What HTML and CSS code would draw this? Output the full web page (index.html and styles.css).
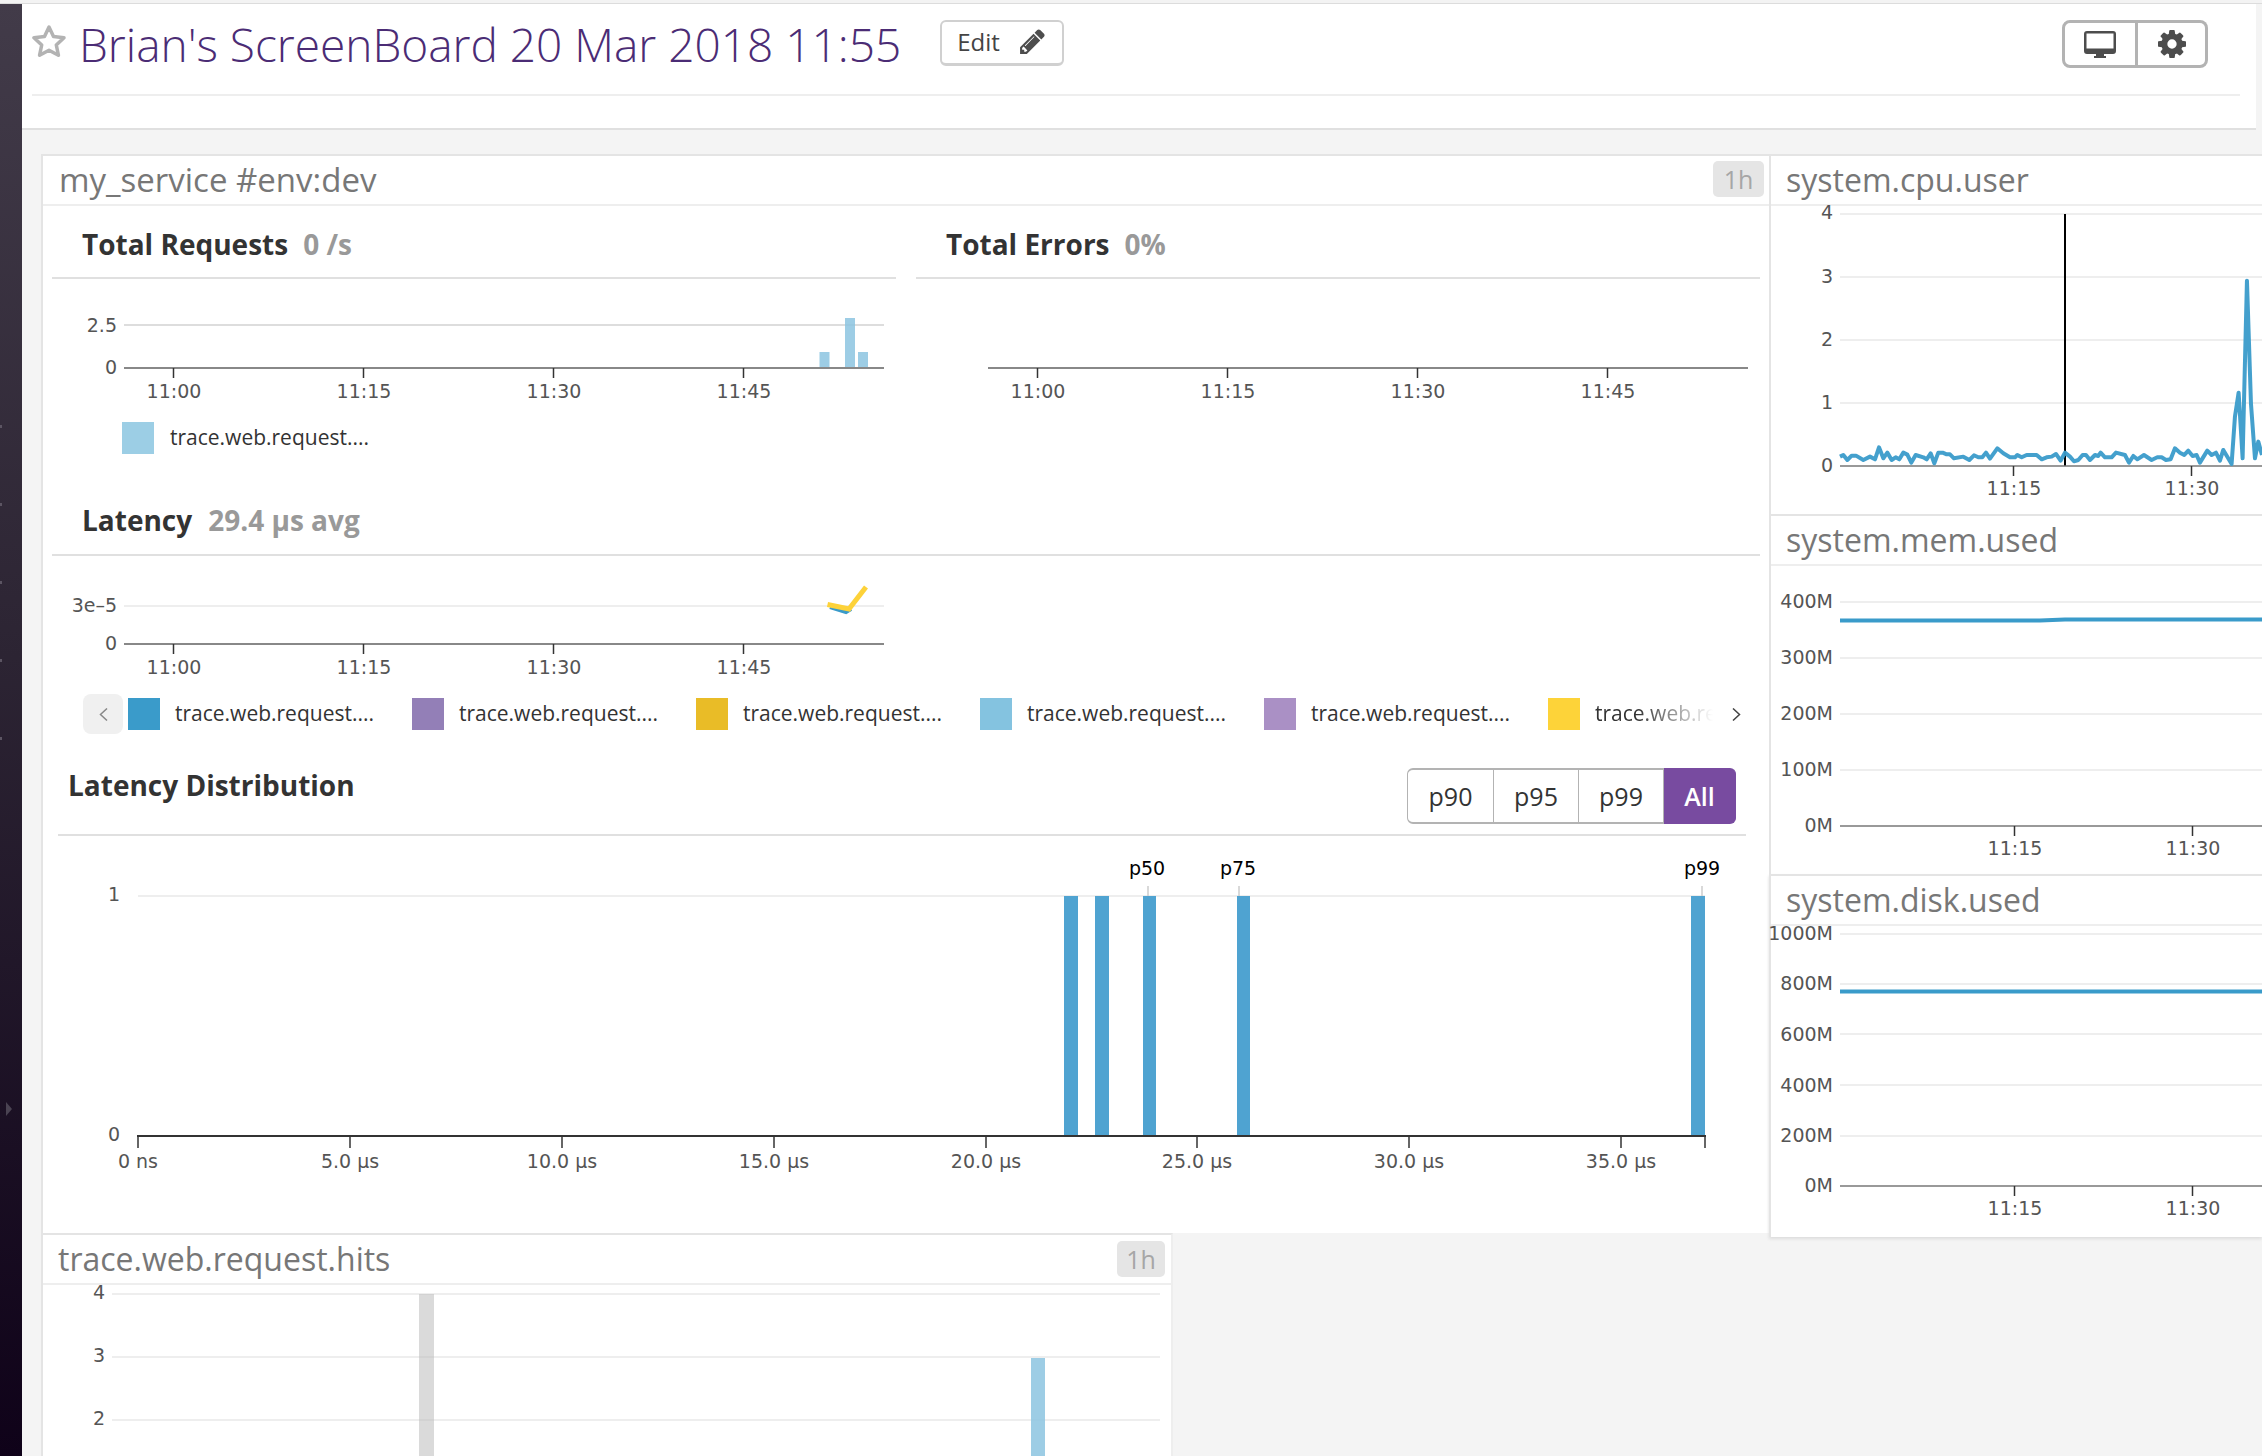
FILE: index.html
```html
<!DOCTYPE html>
<html lang="en">
<head>
    <meta charset="UTF-8">
    <title>Brian's ScreenBoard 20 Mar 2018 11:55</title>
    <link rel="stylesheet" href="styles.css">
</head>
<body>
<div class="page">
    <div class="sidebar">
        <span class="side-dot"></span>
        <span class="side-dot"></span>
        <span class="side-dot"></span>
        <span class="side-dot"></span>
        <span class="side-dot"></span>
        <span class="side-arrow"></span>
    </div>

    <div class="content">
        <header class="board-header">
            <div class="header-top">
                <svg class="star" viewBox="0 0 34 32"><polygon points="17,2 21.5,11.5 32,12.8 24.3,20 26.4,30.2 17,25.2 7.6,30.2 9.7,20 2,12.8 12.5,11.5"/></svg>
                <h1 class="board-title">Brian's ScreenBoard 20 Mar 2018 11:55</h1>
                <button class="edit-btn">Edit
                    <svg class="pencil" viewBox="0 0 1792 1792"><path d="M491 1536l91-91-235-235-91 91v107h128v128h107zm523-928q0-22-22-22-10 0-17 7l-542 542q-7 7-7 17 0 22 22 22 10 0 17-7l542-542q7-7 7-17zm-54-192l416 416-832 832h-416v-416zm683 96q0 53-37 90l-166 166-416-416 166-165q36-38 90-38 53 0 91 38l235 234q37 39 37 91z"/></svg>
                </button>
                <div class="view-btns">
                    <button class="view-btn">
                        <svg class="monitor" viewBox="0 0 32 27"><path fill-rule="evenodd" d="M3 0h26a3 3 0 0 1 3 3v17a3 3 0 0 1-3 3H20v2h2v2H10v-2h2v-2H3a3 3 0 0 1-3-3V3a3 3 0 0 1 3-3zM2.500 2.500V17.500H29.500V2.500z"/></svg>
                    </button>
                    <button class="view-btn">
                        <svg class="gear" viewBox="128 128 1536 1536"><path d="M1152 896q0-106-75-181t-181-75-181 75-75 181 75 181 181 75 181-75 75-181zm512-109v222q0 12-8 23t-20 13l-185 28q-19 54-39 91 35 50 107 138 10 12 10 25t-9 23q-27 37-99 108t-94 71q-12 0-26-9l-138-108q-44 23-91 38-16 136-29 186-7 28-36 28h-222q-14 0-24.500-8.500t-11.500-21.500l-28-184q-49-16-90-37l-141 107q-10 9-25 9-14 0-25-11-126-114-165-168-7-10-7-23 0-12 8-23 15-21 51-66.500t54-70.500q-27-50-41-99l-183-27q-13-2-21-12.500t-8-23.500v-222q0-12 8-23t19-13l186-28q14-46 39-92-40-57-107-138-10-12-10-24 0-10 9-23 26-36 98.500-107.500t94.500-71.500q13 0 26 10l138 107q44-23 91-38 16-136 29-186 7-28 36-28h222q14 0 24.500 8.500t11.500 21.500l28 184q49 16 90 37l142-107q9-9 24-9 13 0 25 10 129 119 165 170 7 8 7 22 0 12-8 23-15 21-51 66.500t-54 70.500q26 50 41 98l183 28q13 2 21 12.500t8 23.500z"/></svg>
                    </button>
                </div>
            </div>
        </header>

        <div class="board">
            <div class="left-col">
                <section class="panel main-panel">
                    <div class="panel-head">
                        <span class="panel-title main-title">my_service #env:dev</span>
                        <span class="time-badge">1h</span>
                    </div>

                    <div class="metric-row">
                        <div class="metric">
                            <div class="metric-title">Total Requests <span class="metric-value">0 /s</span></div>
                            <svg class="chart" width="844" height="137" viewBox="52 279 844 137">
                                <line class="grid dark" x1="124" y1="325" x2="884" y2="325"/>
                                <rect class="bar-light" x="819.500" y="352" width="10" height="16"/>
                                <rect class="bar-light" x="845" y="318" width="10" height="50"/>
                                <rect class="bar-light" x="858" y="352" width="10" height="16"/>
                                <line class="axis" x1="124" y1="368" x2="884" y2="368"/>
                                <line class="tick" x1="173.500" y1="368" x2="173.500" y2="378"/>
                                <line class="tick" x1="363.500" y1="368" x2="363.500" y2="378"/>
                                <line class="tick" x1="553.500" y1="368" x2="553.500" y2="378"/>
                                <line class="tick" x1="743.500" y1="368" x2="743.500" y2="378"/>
                                <text class="y-label" x="117" y="332">2.5</text>
                                <text class="y-label" x="117" y="374">0</text>
                                <text class="x-label" x="174" y="398">11:00</text>
                                <text class="x-label" x="364" y="398">11:15</text>
                                <text class="x-label" x="554" y="398">11:30</text>
                                <text class="x-label" x="744" y="398">11:45</text>
                            </svg>
                            <div class="legend-single">
                                <span class="swatch c-light"></span>
                                <span class="legend-text">trace.web.request....</span>
                            </div>
                        </div>
                        <div class="metric">
                            <div class="metric-title errors">Total Errors <span class="metric-value">0%</span></div>
                            <svg class="chart" width="844" height="137" viewBox="916 279 844 137">
                                <line class="axis" x1="988" y1="368" x2="1748" y2="368"/>
                                <line class="tick" x1="1037.500" y1="368" x2="1037.500" y2="378"/>
                                <line class="tick" x1="1227.500" y1="368" x2="1227.500" y2="378"/>
                                <line class="tick" x1="1417.500" y1="368" x2="1417.500" y2="378"/>
                                <line class="tick" x1="1607.500" y1="368" x2="1607.500" y2="378"/>
                                <text class="x-label" x="1038" y="398">11:00</text>
                                <text class="x-label" x="1228" y="398">11:15</text>
                                <text class="x-label" x="1418" y="398">11:30</text>
                                <text class="x-label" x="1608" y="398">11:45</text>
                            </svg>
                        </div>
                    </div>

                    <div class="latency">
                        <div class="metric-title latency-title">Latency <span class="metric-value">29.4 µs avg</span></div>
                        <svg class="chart" width="1708" height="134" viewBox="52 556 1708 134">
                            <line class="grid" x1="124" y1="606" x2="884" y2="606"/>
                            <polyline class="spark-blue" points="830,607 846,612 851,609"/>
                            <polyline class="spark-yellow" points="827.500,604.500 849,609 866,587"/>
                            <line class="axis" x1="124" y1="644" x2="884" y2="644"/>
                            <line class="tick" x1="173.500" y1="644" x2="173.500" y2="654"/>
                            <line class="tick" x1="363.500" y1="644" x2="363.500" y2="654"/>
                            <line class="tick" x1="553.500" y1="644" x2="553.500" y2="654"/>
                            <line class="tick" x1="743.500" y1="644" x2="743.500" y2="654"/>
                            <text class="y-label" x="117" y="612">3e–5</text>
                            <text class="y-label" x="117" y="650">0</text>
                            <text class="x-label" x="174" y="674">11:00</text>
                            <text class="x-label" x="364" y="674">11:15</text>
                            <text class="x-label" x="554" y="674">11:30</text>
                            <text class="x-label" x="744" y="674">11:45</text>
                        </svg>
                    </div>

                    <div class="legend-row">
                        <span class="legend-prev"><svg class="chevron" viewBox="0 0 9 13"><polyline points="8,.5 1.500,6.500 8,12.500"/></svg></span>
                        <div class="legend-item"><span class="swatch c-blue"></span><span class="legend-text">trace.web.request....</span></div>
                        <div class="legend-item"><span class="swatch c-purple"></span><span class="legend-text">trace.web.request....</span></div>
                        <div class="legend-item"><span class="swatch c-gold"></span><span class="legend-text">trace.web.request....</span></div>
                        <div class="legend-item"><span class="swatch c-sky"></span><span class="legend-text">trace.web.request....</span></div>
                        <div class="legend-item"><span class="swatch c-lilac"></span><span class="legend-text">trace.web.request....</span></div>
                        <div class="legend-item last"><span class="swatch c-yellow"></span><span class="legend-text fade">trace.web.request....</span></div>
                        <span class="legend-next"><svg class="chevron dark" viewBox="0 0 9 13"><polyline points="1,.5 7.500,6.500 1,12.500"/></svg></span>
                    </div>

                    <div class="dist-head">
                        <span class="dist-title">Latency Distribution</span>
                        <div class="pct-btns">
                            <button class="pct-btn">p90</button>
                            <button class="pct-btn">p95</button>
                            <button class="pct-btn">p99</button>
                            <button class="pct-btn active">All</button>
                        </div>
                    </div>

                    <svg class="chart" width="1726" height="396" viewBox="43 836 1726 396">
                        <line class="grid" x1="138" y1="896" x2="1705" y2="896"/>
                        <line class="pct-tick" x1="1148" y1="886" x2="1148" y2="896"/>
                        <line class="pct-tick" x1="1239" y1="886" x2="1239" y2="896"/>
                        <line class="pct-tick" x1="1702" y1="886" x2="1702" y2="896"/>
                        <rect class="bar-dist" x="1064" y="896" width="14" height="240"/>
                        <rect class="bar-dist" x="1095" y="896" width="14" height="240"/>
                        <rect class="bar-dist" x="1143" y="896" width="13" height="240"/>
                        <rect class="bar-dist" x="1237" y="896" width="13" height="240"/>
                        <rect class="bar-dist" x="1691" y="896" width="14" height="240"/>
                        <line class="dist-axis" x1="137" y1="1136" x2="1706" y2="1136"/>
                        <line class="tick" x1="138" y1="1136" x2="138" y2="1148"/>
                        <line class="tick" x1="350" y1="1136" x2="350" y2="1148"/>
                        <line class="tick" x1="562" y1="1136" x2="562" y2="1148"/>
                        <line class="tick" x1="774" y1="1136" x2="774" y2="1148"/>
                        <line class="tick" x1="986" y1="1136" x2="986" y2="1148"/>
                        <line class="tick" x1="1197" y1="1136" x2="1197" y2="1148"/>
                        <line class="tick" x1="1409" y1="1136" x2="1409" y2="1148"/>
                        <line class="tick" x1="1621" y1="1136" x2="1621" y2="1148"/>
                        <line class="tick" x1="1705" y1="1136" x2="1705" y2="1148"/>
                        <text class="pct-label" x="1147" y="875">p50</text>
                        <text class="pct-label" x="1238" y="875">p75</text>
                        <text class="pct-label" x="1702" y="875">p99</text>
                        <text class="y-label" x="120" y="901">1</text>
                        <text class="y-label" x="120" y="1141">0</text>
                        <text class="x-label" x="138" y="1168">0 ns</text>
                        <text class="x-label" x="350" y="1168">5.0 µs</text>
                        <text class="x-label" x="562" y="1168">10.0 µs</text>
                        <text class="x-label" x="774" y="1168">15.0 µs</text>
                        <text class="x-label" x="986" y="1168">20.0 µs</text>
                        <text class="x-label" x="1197" y="1168">25.0 µs</text>
                        <text class="x-label" x="1409" y="1168">30.0 µs</text>
                        <text class="x-label" x="1621" y="1168">35.0 µs</text>
                    </svg>
                </section>

                <section class="panel hits-panel">
                    <div class="panel-head">
                        <span class="panel-title">trace.web.request.hits</span>
                        <span class="time-badge small">1h</span>
                    </div>
                    <svg class="chart" width="1128" height="171" viewBox="43 1285 1128 171">
                        <line class="grid" x1="112" y1="1294" x2="1160" y2="1294"/>
                        <line class="grid" x1="112" y1="1357" x2="1160" y2="1357"/>
                        <line class="grid" x1="112" y1="1420" x2="1160" y2="1420"/>
                        <rect class="bar-gray" x="419" y="1294" width="15" height="162"/>
                        <rect class="bar-light" x="1031" y="1358" width="14" height="98"/>
                        <text class="y-label" x="105" y="1299">4</text>
                        <text class="y-label" x="105" y="1362">3</text>
                        <text class="y-label" x="105" y="1425">2</text>
                    </svg>
                </section>
            </div>

            <div class="right-col">
                <section class="panel side-panel">
                    <div class="panel-head"><span class="panel-title">system.cpu.user</span></div>
                    <svg class="chart" width="491" height="308" viewBox="1771 206 491 308">
                        <line class="grid" x1="1840" y1="214" x2="2262" y2="214"/>
                        <line class="grid" x1="1840" y1="277" x2="2262" y2="277"/>
                        <line class="grid" x1="1840" y1="340" x2="2262" y2="340"/>
                        <line class="grid" x1="1840" y1="403" x2="2262" y2="403"/>
                        <line class="cursor" x1="2065" y1="214" x2="2065" y2="466"/>
                        <line class="axis thin" x1="1840" y1="466" x2="2262" y2="466"/>
                        <line class="tick" x1="2013.500" y1="466" x2="2013.500" y2="476"/>
                        <line class="tick" x1="2191.500" y1="466" x2="2191.500" y2="476"/>
                        <polyline class="cpu-line" transform="translate(1750 150) scale(.3333)" points="270,920 280,915 292,930 305,917 318,917 340,930 360,920 375,928 387,892 400,925 412,908 425,930 437,922 448,928 460,908 472,914 484,938 497,915 520,922 530,928 542,910 553,940 565,908 578,908 590,913 600,913 612,925 640,920 658,930 672,916 685,922 697,922 708,908 720,926 742,895 760,910 780,922 795,922 802,915 815,922 830,915 860,915 875,928 890,922 905,920 918,912 932,932 945,908 960,920 972,934 985,930 998,915 1008,915 1020,930 1035,915 1045,918 1052,908 1065,922 1085,922 1098,908 1125,915 1137,938 1150,918 1162,928 1182,915 1205,930 1222,922 1235,922 1248,930 1262,928 1275,895 1290,908 1303,915 1315,902 1328,918 1340,915 1350,938 1372,902 1385,915 1398,908 1410,932 1420,900 1445,942 1455,800 1466,728 1478,925 1491,392 1503,760 1515,925 1525,875 1536,915"/>
                        <text class="y-label" x="1833" y="219">4</text>
                        <text class="y-label" x="1833" y="283">3</text>
                        <text class="y-label" x="1833" y="346">2</text>
                        <text class="y-label" x="1833" y="409">1</text>
                        <text class="y-label" x="1833" y="472">0</text>
                        <text class="x-label" x="2014" y="495">11:15</text>
                        <text class="x-label" x="2192" y="495">11:30</text>
                    </svg>
                </section>
                <section class="panel side-panel">
                    <div class="panel-head"><span class="panel-title">system.mem.used</span></div>
                    <svg class="chart" width="491" height="308" viewBox="1771 566 491 308">
                        <line class="grid" x1="1840" y1="602" x2="2262" y2="602"/>
                        <line class="grid" x1="1840" y1="658" x2="2262" y2="658"/>
                        <line class="grid" x1="1840" y1="714" x2="2262" y2="714"/>
                        <line class="grid" x1="1840" y1="770" x2="2262" y2="770"/>
                        <polyline class="flat-line" points="1840,620.500 2040,620.500 2065,619.500 2262,619.500"/>
                        <line class="axis thin" x1="1840" y1="826" x2="2262" y2="826"/>
                        <line class="tick" x1="2014.500" y1="826" x2="2014.500" y2="836"/>
                        <line class="tick" x1="2192.500" y1="826" x2="2192.500" y2="836"/>
                        <text class="y-label" x="1833" y="608">400M</text>
                        <text class="y-label" x="1833" y="664">300M</text>
                        <text class="y-label" x="1833" y="720">200M</text>
                        <text class="y-label" x="1833" y="776">100M</text>
                        <text class="y-label" x="1833" y="832">0M</text>
                        <text class="x-label" x="2015" y="855">11:15</text>
                        <text class="x-label" x="2193" y="855">11:30</text>
                    </svg>
                </section>
                <section class="panel side-panel last-side">
                    <div class="panel-head"><span class="panel-title">system.disk.used</span></div>
                    <svg class="chart" width="491" height="311" viewBox="1771 926 491 311">
                        <line class="grid" x1="1840" y1="934" x2="2262" y2="934"/>
                        <line class="grid" x1="1840" y1="984" x2="2262" y2="984"/>
                        <line class="grid" x1="1840" y1="1034" x2="2262" y2="1034"/>
                        <line class="grid" x1="1840" y1="1085" x2="2262" y2="1085"/>
                        <line class="grid" x1="1840" y1="1136" x2="2262" y2="1136"/>
                        <line class="flat-line" x1="1840" y1="991.500" x2="2262" y2="991.500"/>
                        <line class="axis thin" x1="1840" y1="1186" x2="2262" y2="1186"/>
                        <line class="tick" x1="2014.500" y1="1186" x2="2014.500" y2="1196"/>
                        <line class="tick" x1="2192.500" y1="1186" x2="2192.500" y2="1196"/>
                        <text class="y-label" x="1833" y="940">1000M</text>
                        <text class="y-label" x="1833" y="990">800M</text>
                        <text class="y-label" x="1833" y="1041">600M</text>
                        <text class="y-label" x="1833" y="1092">400M</text>
                        <text class="y-label" x="1833" y="1142">200M</text>
                        <text class="y-label" x="1833" y="1192">0M</text>
                        <text class="x-label" x="2015" y="1215">11:15</text>
                        <text class="x-label" x="2193" y="1215">11:30</text>
                    </svg>
                </section>
            </div>
        </div>
    </div>
</div>
</body>
</html>
```

FILE: styles.css
```css
* {
    box-sizing: border-box;
}
html, body {
    margin: 0;
    height: 100%;
    overflow: hidden;
}
body {
    font-family: "Open Sans", sans-serif;
    background-color: #f4f4f4;
    color: #333;
}
button {
    font-family: inherit;
    background: white;
    cursor: pointer;
}
.page {
    display: flex;
    height: 1456px;
    padding-top: 4px;
    background: linear-gradient(#f3f3f3 3px, #dcdcdc 3px, #dcdcdc 4px, transparent 4px);
}

/* sidebar */
.sidebar {
    width: 22px;
    flex: none;
    display: flex;
    flex-direction: column;
    align-items: flex-start;
    gap: 75px;
    padding-top: 421px;
    background: linear-gradient(#423b49, #2c2433 45%, #0f0219);
}
.side-dot {
    width: 2px;
    height: 3px;
    background-color: #5c5563;
}
.side-arrow {
    width: 0;
    height: 0;
    margin: 287px 0 0 6px;
    border-left: 6px solid #4a4352;
    border-top: 7px solid transparent;
    border-bottom: 7px solid transparent;
}

.content {
    flex: 1;
    min-width: 0;
}

/* board header */
.board-header {
    height: 126px;
    margin-right: 6px;
    background: white;
    border-bottom: 2px solid #e0e0e0;
}
.header-top {
    height: 92px;
    margin: 0 16px 0 10px;
    padding-top: 16px;
    display: flex;
    align-items: flex-start;
    border-bottom: 2px solid #eee;
}
.star {
    width: 34px;
    height: 32px;
    margin-top: 5px;
    flex: none;
}
.star polygon {
    fill: none;
    stroke: #b3b3b3;
    stroke-width: 3.500;
    stroke-linejoin: round;
}
.board-title {
    margin: -8px 0 0 13px;
    font-size: 46px;
    font-weight: 300;
    line-height: 64px;
    color: #4b2c75;
    white-space: nowrap;
}
.edit-btn {
    margin-left: 39px;
    width: 124px;
    height: 46px;
    flex: none;
    display: flex;
    align-items: center;
    justify-content: space-between;
    padding: 0 15px 2px;
    font-size: 24px;
    color: #444;
    border: 2px solid #d0d0d0;
    border-bottom-width: 3px;
    border-radius: 6px;
}
.pencil {
    width: 29px;
    height: 29px;
    fill: #4d4d4d;
}
.view-btns {
    margin-left: auto;
    margin-right: 32px;
    display: flex;
}
.view-btn {
    width: 76px;
    height: 48px;
    padding: 0;
    display: flex;
    align-items: center;
    justify-content: center;
    border: 3px solid #b3b3b3;
    border-radius: 8px 0 0 8px;
}
.view-btn + .view-btn {
    width: 70px;
    border-left: 0;
    border-radius: 0 8px 8px 0;
}
.monitor {
    width: 32px;
    height: 27px;
    fill: #4d4d4d;
}
.gear {
    width: 28px;
    height: 28px;
    fill: #4d4d4d;
}

/* widgets */
.board {
    display: flex;
    padding: 24px 0 0 19px;
}
.left-col {
    width: 1728px;
    flex: none;
}
.right-col {
    flex: 1;
    min-width: 0;
}
.panel {
    background: white;
    border-top: 2px solid #e4e4e4;
    border-left: 2px solid #e4e4e4;
}
.main-panel {
    height: 1079px;
}
.hits-panel {
    width: 1132px;
    height: 223px;
    border-right: 2px solid #eee;
}
.side-panel {
    height: 360px;
}
.last-side {
    height: 363px;
    box-shadow: 0 2px 3px #ddd;
}
.panel-head {
    height: 50px;
    display: flex;
    align-items: flex-start;
    justify-content: space-between;
    padding-left: 15px;
    border-bottom: 2px solid #eee;
}
.panel-title {
    font-size: 32px;
    line-height: 48px;
    color: #777;
    white-space: nowrap;
}
.main-title {
    margin-left: 1px;
    font-size: 33px;
}
.time-badge {
    margin: 5px 5px 0 0;
    width: 51px;
    height: 36px;
    text-align: center;
    font-size: 25px;
    line-height: 36px;
    color: #a6a6a6;
    background-color: #e5e5e5;
    border-radius: 5px;
}
.time-badge.small {
    margin: 6px 6px 0 0;
    width: 48px;
}
.metric-row {
    display: flex;
    gap: 20px;
    margin: 0 9px;
}
.metric {
    width: 844px;
}
.metric-title {
    height: 73px;
    padding: 5px 0 0 30px;
    display: flex;
    align-items: center;
    gap: 15px;
    font-size: 28px;
    font-weight: 700;
    color: #333;
    border-bottom: 2px solid #e0e0e0;
    white-space: nowrap;
}
.metric-value {
    font-weight: 700;
    color: #999;
}
.latency {
    margin: 28px 9px 0;
}
.latency-title {
    height: 74px;
    padding-top: 4px;
    gap: 16px;
}
.chart {
    display: block;
    overflow: visible;
}
.grid {
    stroke: #eee;
    stroke-width: 2;
}
.grid.dark {
    stroke: #ddd;
}
.axis {
    stroke: #888;
    stroke-width: 2;
}
.axis.thin {
    stroke: #777;
    stroke-width: 1.500;
}
.tick {
    stroke: #333;
    stroke-width: 1.500;
}
.pct-tick {
    stroke: #ccc;
    stroke-width: 1.500;
}
.dist-axis {
    stroke: #333;
    stroke-width: 2;
}
.cursor {
    stroke: black;
    stroke-width: 2;
}
.y-label, .x-label, .pct-label {
    font-family: "DejaVu Sans", sans-serif;
    font-size: 19px;
    fill: #555;
}
.y-label {
    text-anchor: end;
}
.x-label, .pct-label {
    text-anchor: middle;
}
.pct-label {
    fill: black;
}
.bar-light {
    fill: #8cc4e0;
    opacity: 0.85;
}
.bar-gray {
    fill: #bbb;
    opacity: 0.55;
}
.bar-dist {
    fill: #4fa3d1;
}
.spark-blue, .spark-yellow, .cpu-line, .flat-line {
    fill: none;
}
.spark-blue {
    stroke: #3a9bca;
    stroke-width: 4;
}
.spark-yellow {
    stroke: #fdd239;
    stroke-width: 5;
}
.cpu-line {
    stroke: #3a9bca;
    stroke-width: 12;
    stroke-linejoin: round;
    opacity: 0.95;
}
.flat-line {
    stroke: #3a9bca;
    stroke-width: 4;
}

/* legends */
.swatch {
    width: 32px;
    height: 32px;
    flex: none;
}
.c-light { background-color: #9ccee5; }
.c-blue { background-color: #3a9bca; }
.c-purple { background-color: #937fb7; }
.c-gold { background-color: #e9bc27; }
.c-sky { background-color: #84c3e0; }
.c-lilac { background-color: #aa90c5; }
.c-yellow { background-color: #fdd339; }
.legend-single {
    display: flex;
    align-items: center;
    gap: 16px;
    margin: 6px 0 0 70px;
}
.legend-text {
    padding-bottom: 2px;
    font-size: 21px;
    line-height: 30px;
    color: #333;
    white-space: nowrap;
}
.legend-row {
    height: 40px;
    margin: 4px 0 0 40px;
    display: flex;
    align-items: center;
}
.legend-prev {
    width: 40px;
    height: 40px;
    margin-right: 5px;
    display: flex;
    align-items: center;
    justify-content: center;
    background-color: #f0f0f0;
    border-radius: 8px;
}
.legend-next {
    margin-left: 19px;
    display: flex;
}
.chevron {
    width: 9px;
    height: 13px;
    fill: none;
    stroke: #888;
    stroke-width: 1.500;
}
.chevron.dark {
    stroke: #444;
}
.legend-item {
    width: 284px;
    display: flex;
    align-items: center;
    gap: 15px;
}
.legend-item.last {
    width: 165px;
}
.legend-text.fade {
    width: 118px;
    overflow: hidden;
    -webkit-mask-image: linear-gradient(to right, black 35%, transparent);
    mask-image: linear-gradient(to right, black 35%, transparent);
}

/* latency distribution */
.dist-head {
    height: 102px;
    margin: 0 23px 0 15px;
    padding: 0 10px;
    display: flex;
    align-items: flex-start;
    justify-content: space-between;
    border-bottom: 2px solid #e0e0e0;
}
.dist-title {
    margin-top: 32px;
    font-size: 28px;
    line-height: 38px;
    font-weight: 700;
    color: #333;
}
.pct-btns {
    margin-top: 34px;
    height: 56px;
    display: flex;
}
.pct-btn {
    width: 85px;
    padding: 0;
    font-size: 25px;
    color: #333;
    border: 1.500px solid #b3b3b3;
    border-top-width: 2px;
    border-bottom-width: 2px;
    border-left: 0;
}
.pct-btn:first-child {
    width: 87px;
    border-left: 1.500px solid #b3b3b3;
    border-radius: 6px 0 0 6px;
}
.pct-btn.active {
    width: 72px;
    color: white;
    font-weight: 600;
    background-color: #784ba0;
    border-color: #784ba0;
    border-radius: 0 6px 6px 0;
}
```
